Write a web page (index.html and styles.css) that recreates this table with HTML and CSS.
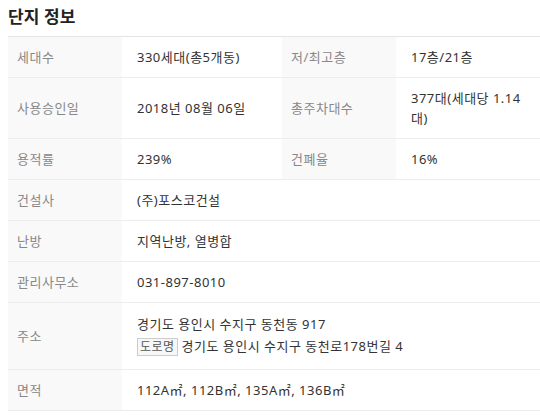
FILE: index.html
```html
<!DOCTYPE html>
<html lang="ko">
<head>
  <meta charset="UTF-8" />
  <meta name="viewport" content="width=device-width, initial-scale=1.0">
  <title>단지 정보</title>
  <link rel="stylesheet" href="styles.css">
</head>
<body>

  <!-- Title -->
  <h3 class="title">단지 정보</h3>

  <!-- Info table -->
  <table class="info">
    <colgroup>
      <col class="c-label">
      <col class="c-value">
      <col class="c-label">
      <col class="c-value2">
    </colgroup>
    <tr>
      <th>세대수</th>
      <td>330세대(총5개동)</td>
      <th>저/최고층</th>
      <td>17층/21층</td>
    </tr>
    <tr>
      <th>사용승인일</th>
      <td>2018년 08월 06일</td>
      <th>총주차대수</th>
      <td>377대(세대당 1.14 대)</td>
    </tr>
    <tr>
      <th>용적률</th>
      <td>239%</td>
      <th>건폐율</th>
      <td>16%</td>
    </tr>
    <tr>
      <th>건설사</th>
      <td colspan="3">(주)포스코건설</td>
    </tr>
    <tr>
      <th>난방</th>
      <td colspan="3">지역난방, 열병합</td>
    </tr>
    <tr>
      <th>관리사무소</th>
      <td colspan="3">031-897-8010</td>
    </tr>
    <tr class="addr">
      <th>주소</th>
      <td colspan="3">
        <div>경기도 용인시 수지구 동천동 917</div>
        <div><span class="badge">도로명</span> 경기도 용인시 수지구 동천로178번길 4</div>
      </td>
    </tr>
    <tr>
      <th>면적</th>
      <td colspan="3">112A㎡, 112B㎡, 135A㎡, 136B㎡</td>
    </tr>
  </table>

</body>
</html>
```

FILE: styles.css
```css
html {
  overflow: hidden;
}

body {
  margin: 0;
  padding: 5px 0 0 8px;
  background: white;
  color: #333;
  font-family: "Noto Sans", "Noto Sans CJK KR", sans-serif;
  font-size: 13px;
  letter-spacing: 0.5px;
}

.title {
  margin: 0 0 9px;
  font-family: "Noto Sans CJK KR", sans-serif;
  font-size: 17px;
  font-weight: bold;
  line-height: 22px;
  letter-spacing: 0;
  color: #222;
}

.info {
  width: 540px;
  border-collapse: collapse;
  table-layout: fixed;
  border-top: 1px solid #e4e4e4;
}

.c-label {
  width: 114px;
}

.c-value {
  width: 160px;
}

.info th,
.info td {
  border-bottom: 1px solid #ededed;
  line-height: 20px;
  text-align: left;
  vertical-align: middle;
}

.info th {
  background-color: #f9f9f9;
  color: #888;
  font-weight: normal;
  padding: 10px 9px;
}

.info td {
  padding: 10px 16px 10px 15px;
  color: #333;
}

.addr td {
  padding: 10px 15px 12px;
}

.addr td div {
  line-height: 22px;
}

.badge {
  display: inline-block;
  padding: 0 2px;
  border: 1px solid #ccc;
  background-color: #f7f7f7;
  color: #555;
  font-size: 12px;
  line-height: 16px;
}
```
